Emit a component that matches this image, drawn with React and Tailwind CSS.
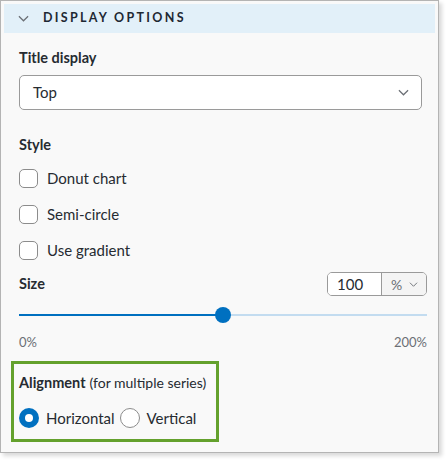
import { useState } from "react";

const Chevron = ({ className }) => (
  <svg viewBox="0 0 12 7" className={className} fill="none" stroke="currentColor" strokeWidth="1.3">
    <path d="M1 1l5 5 5-5" />
  </svg>
);

const Checkbox = ({ label, checked, onChange }) => (
  <label className="flex items-center h-[36px] cursor-pointer">
    <span
      onClick={onChange}
      className={`w-[19px] h-[19px] rounded-[5px] border ${checked ? "bg-[#0070c0] border-[#0070c0]" : "border-[#8c8c8c] bg-white"}`}
    />
    <span className="ml-[9px] text-[15px] text-[#262b31]">{label}</span>
  </label>
);

const Radio = ({ label, checked, onClick }) => (
  <button onClick={onClick} className="flex items-center mr-[5px]">
    {checked ? (
      <span className="w-[20px] h-[20px] rounded-full bg-[#0070c0] flex items-center justify-center">
        <span className="w-[8px] h-[8px] rounded-full bg-white" />
      </span>
    ) : (
      <span className="w-[20px] h-[20px] rounded-full border border-[#8c8c8c] bg-white" />
    )}
    <span className="ml-[7px] text-[15px] text-[#262b31]">{label}</span>
  </button>
);

export default function App() {
  const [style, setStyle] = useState({ donut: false, semi: false, gradient: false });
  const [align, setAlign] = useState("horizontal");
  const size = 100;
  const pct = (size / 200) * 100;

  return (
    <div className="w-[448px] h-[461px] bg-white font-['Lato',sans-serif]">
      <div className="w-[439px] h-[453px] border border-[#b4b4b4] bg-[#f9f9f9] p-[3px] shadow-[3px_3px_4px_rgba(0,0,0,0.15)]">
        <div className="h-[29px] bg-[#e2f0f9] flex items-center pl-[14px]">
          <Chevron className="w-[11px] h-[7px] text-[#6b6f75]" />
          <span className="ml-[14px] text-[12.5px] font-bold tracking-[2.3px] text-[#1e2833]">DISPLAY OPTIONS</span>
        </div>

        <div className="pl-[15px] pr-[8px] pt-[15px]">
          <div className="text-[14.5px] font-bold text-[#262b31] leading-[20px]">Title display</div>
          <button className="mt-[7px] w-[403px] h-[35px] rounded-[5px] border border-[#9a9a9a] bg-white flex items-center justify-between pl-[13px] pr-[12px]">
            <span className="text-[15px] text-[#262b31]">Top</span>
            <Chevron className="w-[11px] h-[7px] text-[#6b6f75]" />
          </button>

          <div className="mt-[25px] text-[14.5px] font-bold text-[#262b31] leading-[20px]">Style</div>
          <div className="mt-[5px] flex flex-col">
            <Checkbox label="Donut chart" checked={style.donut} onChange={() => setStyle({ ...style, donut: !style.donut })} />
            <Checkbox label="Semi-circle" checked={style.semi} onChange={() => setStyle({ ...style, semi: !style.semi })} />
            <Checkbox label="Use gradient" checked={style.gradient} onChange={() => setStyle({ ...style, gradient: !style.gradient })} />
          </div>

          <div className="mt-[4px] flex items-start justify-between">
            <div className="mt-[2px] text-[14.5px] font-bold text-[#262b31] leading-[20px]">Size</div>
            <div className="flex h-[24px] w-[100px] rounded-[5px] border border-[#9a9a9a] overflow-hidden">
              <div className="w-[54px] bg-white border-r border-[#9a9a9a] flex items-center pl-[9px] text-[15px] text-[#262b31]">{size}</div>
              <div className="flex-1 bg-[#f4f4f4] flex items-center pl-[9px] gap-[7px] text-[14px] text-[#6b6f75]">
                %
                <Chevron className="w-[9px] h-[5px] text-[#6b6f75]" />
              </div>
            </div>
          </div>

          <div className="relative mt-[11px] h-[16px] flex items-center">
            <div className="w-full h-[2px] bg-[#c3dcf0]">
              <div className="h-[2px] bg-[#0070c0]" style={{ width: `${pct}%` }} />
            </div>
            <div
              className="absolute top-0 w-[16px] h-[16px] rounded-full bg-[#0070c0] -ml-[8px]"
              style={{ left: `${pct}%` }}
            />
          </div>

          <div className="mt-[11px] flex justify-between text-[13px] text-[#6b6f75] leading-[16px]">
            <span>0%</span>
            <span>200%</span>
          </div>

          <div className="mt-[11px] -ml-[8px] w-[208px] h-[81px] border-[3px] border-[#64a12d] pl-[5px] pt-[9px]">
            <div className="whitespace-nowrap text-[14px] text-[#262b31] leading-[20px]">
              <span className="font-bold text-[14.5px]">Alignment</span>
              <span className="ml-[4px]">(for multiple series)</span>
            </div>
            <div className="mt-[14px] flex items-center">
              <Radio label="Horizontal" checked={align === "horizontal"} onClick={() => setAlign("horizontal")} />
              <Radio label="Vertical" checked={align === "vertical"} onClick={() => setAlign("vertical")} />
            </div>
          </div>
        </div>
      </div>
    </div>
  );
}
